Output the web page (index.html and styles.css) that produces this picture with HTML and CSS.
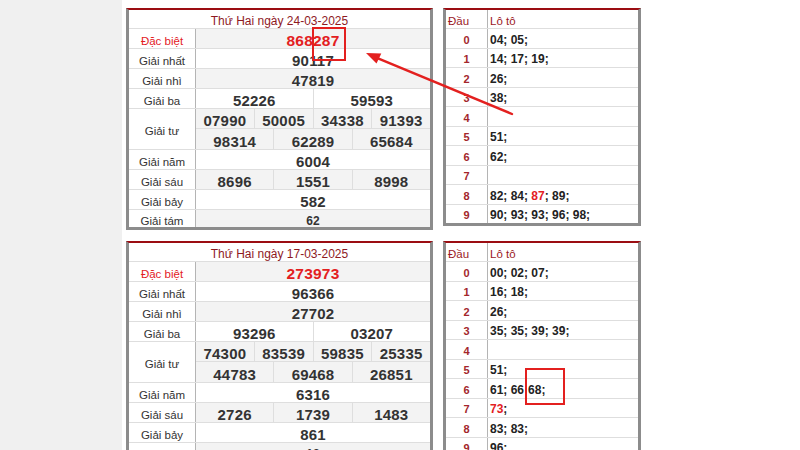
FILE: index.html
```html
<!DOCTYPE html>
<html lang="vi">
<head>
<meta charset="utf-8">
<title>Kết quả xổ số</title>
<link rel="stylesheet" href="styles.css">
</head>
<body>
<div class="page">
  <aside class="side"></aside>
  <main class="main">
    <div class="prev"></div>

    <section class="sec">
      <div class="kq">
        <div class="hd">Thứ Hai ngày 24-03-2025</div>
        <div class="lb red">Đặc biệt</div><div class="v s12 g db">868287</div>
        <div class="lb">Giải nhất</div><div class="v s12">90117</div>
        <div class="lb">Giải nhì</div><div class="v s12 g">47819</div>
        <div class="lb">Giải ba</div><div class="v s6">52226</div><div class="v s6">59593</div>
        <div class="lb r2">Giải tư</div><div class="v s3 g">07990</div><div class="v s3 g">50005</div><div class="v s3 g">34338</div><div class="v s3 g">91393</div>
        <div class="v s4 g">98314</div><div class="v s4 g">62289</div><div class="v s4 g">65684</div>
        <div class="lb">Giải năm</div><div class="v s12">6004</div>
        <div class="lb">Giải sáu</div><div class="v s4 g">8696</div><div class="v s4 g">1551</div><div class="v s4 g">8998</div>
        <div class="lb">Giải bảy</div><div class="v s12">582</div>
        <div class="lb">Giải tám</div><div class="v s12 g sm">62</div>
      </div>
      <div class="lt">
        <div class="th">Đầu</div><div class="th">Lô tô</div>
        <div class="d">0</div><div class="n">04; 05;</div>
        <div class="d">1</div><div class="n">14; 17; 19;</div>
        <div class="d">2</div><div class="n">26;</div>
        <div class="d">3</div><div class="n">38;</div>
        <div class="d">4</div><div class="n"></div>
        <div class="d">5</div><div class="n">51;</div>
        <div class="d">6</div><div class="n">62;</div>
        <div class="d">7</div><div class="n"></div>
        <div class="d">8</div><div class="n">82;&nbsp;84;&nbsp;<span class="hl">87</span>;&nbsp;89;</div>
        <div class="d">9</div><div class="n">90; 93; 93; 96; 98;</div>
      </div>
    </section>

    <section class="sec">
      <div class="kq">
        <div class="hd">Thứ Hai ngày 17-03-2025</div>
        <div class="lb red">Đặc biệt</div><div class="v s12 g db">273973</div>
        <div class="lb">Giải nhất</div><div class="v s12">96366</div>
        <div class="lb">Giải nhì</div><div class="v s12 g">27702</div>
        <div class="lb">Giải ba</div><div class="v s6">93296</div><div class="v s6">03207</div>
        <div class="lb r2">Giải tư</div><div class="v s3 g">74300</div><div class="v s3 g">83539</div><div class="v s3 g">59835</div><div class="v s3 g">25335</div>
        <div class="v s4 g">44783</div><div class="v s4 g">69468</div><div class="v s4 g">26851</div>
        <div class="lb">Giải năm</div><div class="v s12">6316</div>
        <div class="lb">Giải sáu</div><div class="v s4 g">2726</div><div class="v s4 g">1739</div><div class="v s4 g">1483</div>
        <div class="lb">Giải bảy</div><div class="v s12">861</div>
        <div class="lb">Giải tám</div><div class="v s12 g sm">18</div>
      </div>
      <div class="lt">
        <div class="th">Đầu</div><div class="th">Lô tô</div>
        <div class="d">0</div><div class="n">00; 02; 07;</div>
        <div class="d">1</div><div class="n">16; 18;</div>
        <div class="d">2</div><div class="n">26;</div>
        <div class="d">3</div><div class="n">35; 35; 39; 39;</div>
        <div class="d">4</div><div class="n"></div>
        <div class="d">5</div><div class="n">51;</div>
        <div class="d">6</div><div class="n">61; 66<span class="hid">;</span> 68;</div>
        <div class="d">7</div><div class="n"><span class="hl">73</span>;</div>
        <div class="d">8</div><div class="n">83; 83;</div>
        <div class="d">9</div><div class="n">96;</div>
      </div>
    </section>
  </main>

  <div class="mark mark-1"></div>
  <div class="mark mark-2"></div>
  <svg class="arrow" width="800" height="450" viewBox="0 0 800 450">
    <line x1="512" y1="114" x2="378" y2="58.4" stroke="#e3201f" stroke-width="2.4" stroke-linecap="round"/>
    <polygon points="366,53 381.3,53.4 376.5,63.4" fill="#e3201f"/>
  </svg>
</div>
</body>
</html>
```
FILE: styles.css
```css
html, body {
  margin: 0;
  padding: 0;
  background: #fff;
}
body {
  font-family: "Liberation Sans", Arial, sans-serif;
  color: #333;
}
.page {
  position: relative;
  display: flex;
  width: 800px;
  height: 450px;
  overflow: hidden;
}
.side {
  width: 122px;
  flex: none;
  background: #f0f0f0;
}
.main {
  padding-left: 4px;
  display: flex;
  flex-direction: column;
}
.prev {
  width: 307px;
  height: 2px;
  background: #9a9a9a;
  margin-bottom: 8px;
}
.sec {
  display: flex;
  align-items: flex-start;
  gap: 10px;
  margin-bottom: 11px;
}

/* results table */
.kq {
  width: 307px;
  box-sizing: border-box;
  border: 3px solid #8c8c8c;
  border-top: 2px solid #9b0d12;
  display: grid;
  grid-template-columns: 66px repeat(12, 1fr);
  grid-template-rows: 18px 19px 19px 19px 19px 19px 20px 19px 19px 19px 17px;
  gap: 1px;
  background: #dedede;
}
.kq > div {
  display: flex;
  align-items: center;
  justify-content: center;
  background: #fff;
  white-space: nowrap;
  box-sizing: border-box;
  padding-top: 4px;
}
.hd {
  grid-column: 1 / -1;
  font-size: 12px;
  color: #8e1a1f;
}
.lb {
  grid-column: 1;
  font-size: 11.5px;
  color: #333;
  box-shadow: 1px 0 0 #b4b4b4;
}
.lb.red { color: #e3201f; }
.lb.r2 { grid-row: span 2; }
.v {
  font-size: 15px;
  font-weight: bold;
  color: #333;
  letter-spacing: 0.2px;
}
.kq > .g { background: #f3f3f3; }
.s12 { grid-column: span 12; }
.s6 { grid-column: span 6; }
.s4 { grid-column: span 4; }
.s3 { grid-column: span 3; }
.v.db { color: #e3201f; font-size: 15.5px; }
.v.sm { font-size: 12px; }

/* loto table */
.lt {
  width: 198px;
  box-sizing: border-box;
  border: 3px solid #8c8c8c;
  border-top: 2px solid #9b0d12;
  display: grid;
  grid-template-columns: 41px 1fr;
  grid-template-rows: 18px repeat(10, 18.5px);
  gap: 1px;
  background: #dedede;
}
.lt > div {
  display: flex;
  align-items: center;
  background: #fff;
  white-space: nowrap;
  box-sizing: border-box;
  padding-top: 3px;
}
.lt > div:nth-child(odd) { box-shadow: 1px 0 0 #b4b4b4; }
.th {
  font-size: 11.5px;
  color: #9b1a1f;
  padding-left: 2px;
}
.d {
  justify-content: center;
  font-size: 11px;
  font-weight: bold;
  color: #a3262b;
}
.n {
  font-size: 12px;
  font-weight: bold;
  color: #222;
  padding-left: 2px;
}
.hl { color: #e3201f; }
.hid { color: transparent; }

/* annotations */
.mark {
  position: absolute;
  box-sizing: border-box;
  border: 2px solid #e3201f;
}
.mark-1 { left: 312px; top: 27px; width: 34px; height: 34px; }
.mark-2 { left: 525px; top: 368px; width: 40px; height: 37px; }
.arrow {
  position: absolute;
  left: 0;
  top: 0;
  pointer-events: none;
}
```
